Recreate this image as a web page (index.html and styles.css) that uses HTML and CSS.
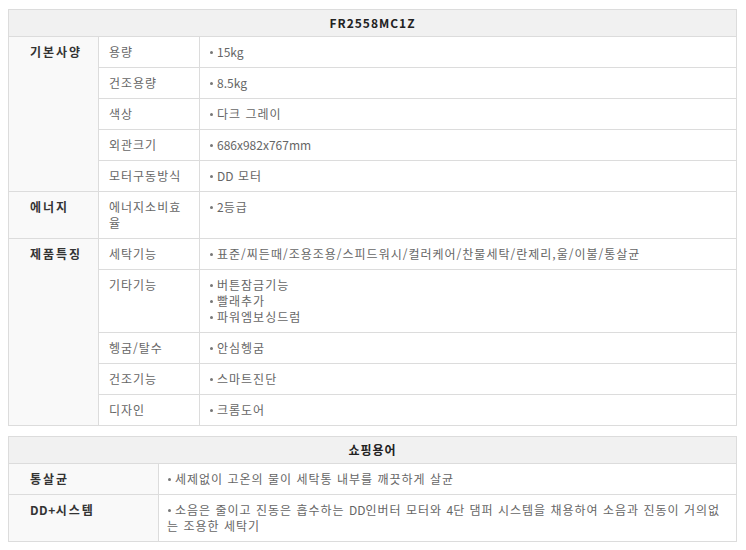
FILE: index.html
```html
<!DOCTYPE html>
<html lang="ko">
<head>
<meta charset="utf-8">
<link rel="stylesheet" href="styles.css">
</head>
<body>
<table class="spec">
  <colgroup><col class="c1"><col class="c2"><col></colgroup>
  <tr><th colspan="3" class="head">FR2558MC1Z</th></tr>
  <tr><td rowspan="5" class="cat">기본사양</td><td class="name">용량</td><td class="val"><span class="dot"></span><span class="en">15kg</span></td></tr>
  <tr><td class="name">건조용량</td><td class="val"><span class="dot"></span><span class="en">8.5kg</span></td></tr>
  <tr><td class="name">색상</td><td class="val"><span class="dot"></span>다크 그레이</td></tr>
  <tr><td class="name">외관크기</td><td class="val"><span class="dot"></span><span class="en">686x982x767mm</span></td></tr>
  <tr><td class="name">모터구동방식</td><td class="val"><span class="dot"></span><span class="en">DD</span> 모터</td></tr>
  <tr><td class="cat">에너지</td><td class="name">에너지소비효율</td><td class="val"><span class="dot"></span><span class="en">2</span>등급</td></tr>
  <tr><td rowspan="5" class="cat">제품특징</td><td class="name">세탁기능</td><td class="val"><span class="dot"></span>표준/찌든때/조용조용/스피드워시/컬러케어/찬물세탁/란제리,울/이불/통살균</td></tr>
  <tr><td class="name">기타기능</td><td class="val"><span class="dot"></span>버튼잠금기능<br><span class="dot"></span>빨래추가<br><span class="dot"></span>파워엠보싱드럼</td></tr>
  <tr><td class="name">헹굼/탈수</td><td class="val"><span class="dot"></span>안심헹굼</td></tr>
  <tr><td class="name">건조기능</td><td class="val"><span class="dot"></span>스마트진단</td></tr>
  <tr><td class="name">디자인</td><td class="val"><span class="dot"></span>크롬도어</td></tr>
</table>

<table class="spec terms">
  <colgroup><col class="t1"><col></colgroup>
  <tr><th colspan="2" class="head">쇼핑용어</th></tr>
  <tr><td class="cat">통살균</td><td class="val v2"><span class="dot"></span>세제없이 고온의 물이 세탁통 내부를 깨끗하게 살균</td></tr>
  <tr><td class="cat"><span class="en">DD+</span>시스템</td><td class="val v2"><span class="dot"></span>소음은 줄이고 진동은 흡수하는 <span class="en">DD</span>인버터 모터와 <span class="en">4</span>단 댐퍼 시스템을 채용하여 소음과 진동이 거의없는 조용한 세탁기</td></tr>
</table>
</body>
</html>
```
FILE: styles.css
```css
body {
  margin: 9px 8px 8px 8px;
  background: #fff;
  font-family: "Noto Sans CJK KR", "Noto Sans", sans-serif;
  font-size: 12px;
  color: #666;
  letter-spacing: 1px;
}
.spec {
  width: 729px;
  border-collapse: collapse;
  table-layout: fixed;
  border: 1px solid #dcdcdc;
}
.terms { margin-top: 10px; }
.c1 { width: 90px; }
.c2 { width: 101px; }
.t1 { width: 150px; }
.spec th, .spec td {
  border: 1px solid #dcdcdc;
  vertical-align: top;
  line-height: 16px;
  padding: 7px 8px 7px 9px;
  text-align: left;
  font-weight: normal;
}
.spec th.head {
  background: #f1f1f1;
  text-align: center;
  font-weight: bold;
  color: #222;
  padding: 5px 0 5px;
}
.spec td.cat {
  background: #f9f9f9;
  font-weight: bold;
  color: #333;
  padding-left: 21px;
  letter-spacing: 2px;
}
.spec td.name {
  padding-left: 10px;
  word-break: break-all;
}
.spec td.val { padding-left: 9px; }
.spec td.v2 { padding-left: 8px; word-break: break-all; }
.en { letter-spacing: 0; }
.cat .en { letter-spacing: 0.5px; }
.dot {
  display: inline-block;
  width: 3px;
  height: 3px;
  border-radius: 50%;
  background: #777;
  vertical-align: middle;
  margin: 0 4px 2px 1px;
}
```
